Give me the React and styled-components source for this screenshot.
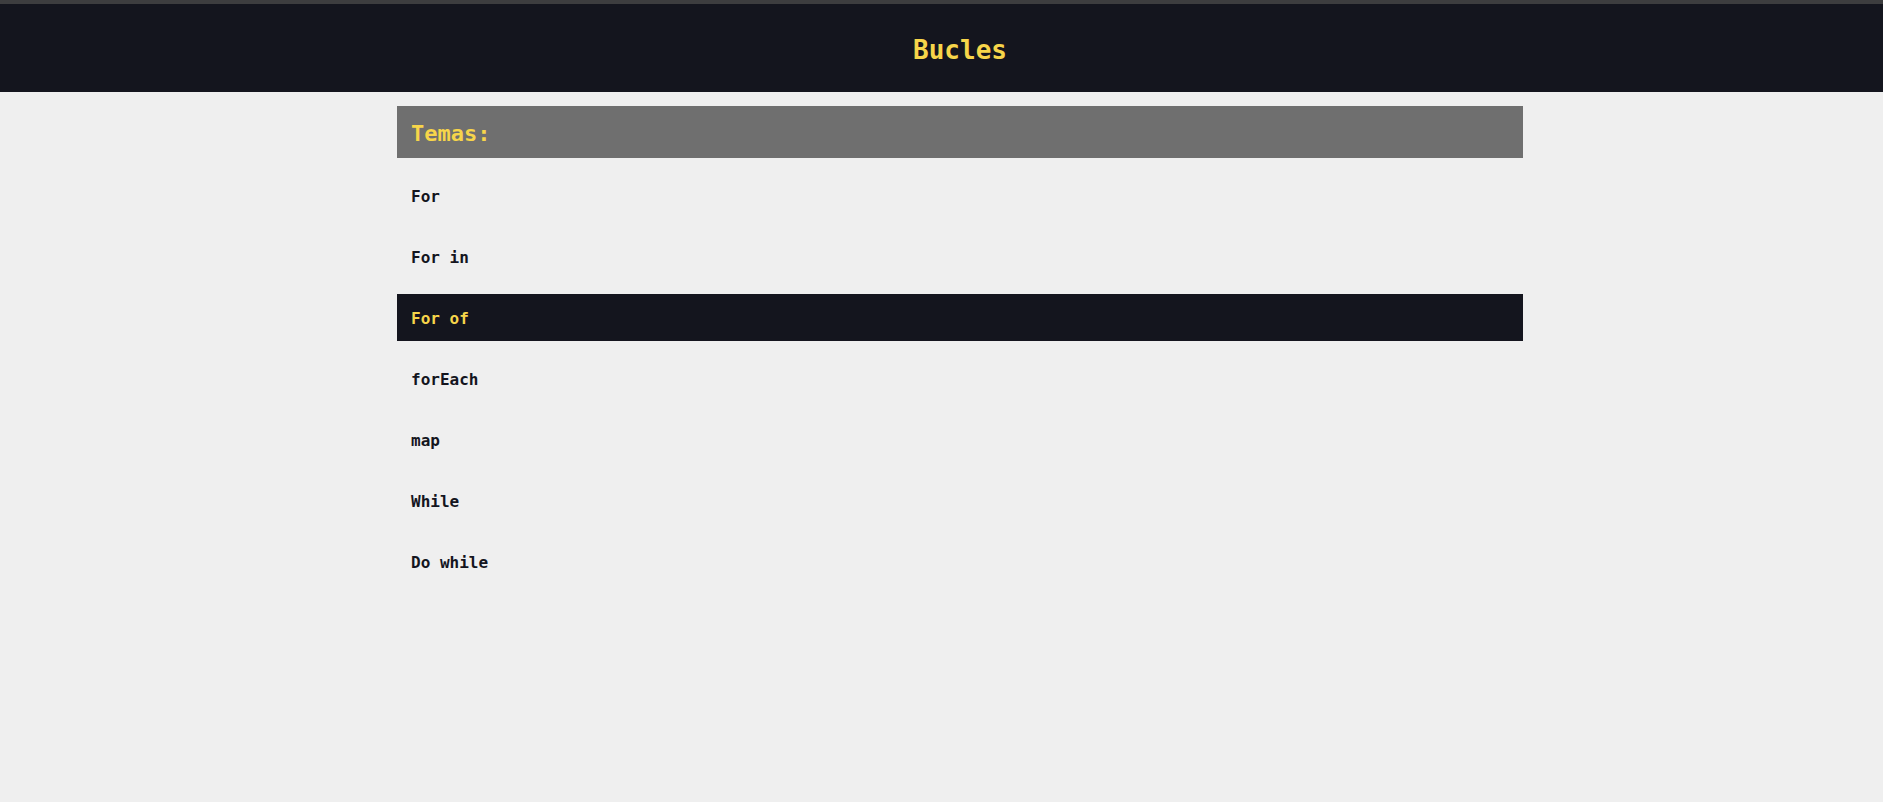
import React from "react";
import styled, { createGlobalStyle } from "styled-components";

const Global = createGlobalStyle`
  html, body { margin: 0; padding: 0; background: #efefef; }
  body { font-family: "DejaVu Sans Mono", "Liberation Mono", monospace; }
  * { box-sizing: border-box; }
`;

const TopStrip = styled.div`
  height: 4px;
  background: #3d3d3f;
`;

const Header = styled.header`
  height: 88px;
  background: #14151e;
  display: flex;
  align-items: center;
  justify-content: center;
  padding: 3px 0 0 37px;
`;

const Title = styled.h1`
  margin: 0;
  font-size: 26px;
  font-weight: bold;
  color: #f7d54a;
`;

const Main = styled.main`
  display: flex;
  justify-content: center;
  padding: 14px 0 0 37px;
`;

const Panel = styled.section`
  width: 1126px;
  display: flex;
  flex-direction: column;
  gap: 14px;
`;

const PanelHead = styled.div`
  height: 52px;
  background: #6f6f6f;
  display: flex;
  align-items: center;
  padding: 2px 0 0 14px;
  font-size: 22px;
  font-weight: bold;
  color: #f7d54a;
`;

const List = styled.ul`
  list-style: none;
  margin: 0;
  padding: 0;
  display: flex;
  flex-direction: column;
  gap: 14px;
`;

const Item = styled.li`
  height: 47px;
  display: flex;
  align-items: center;
  padding: 2px 0 0 14px;
  font-size: 16px;
  font-weight: bold;
  background: ${(p) => (p.$active ? "#14151e" : "transparent")};
  color: ${(p) => (p.$active ? "#f7d54a" : "#14151e")};
`;

const topics = ["For", "For in", "For of", "forEach", "map", "While", "Do while"];

export default function App() {
  return (
    <>
      <Global />
      <TopStrip />
      <Header>
        <Title>Bucles</Title>
      </Header>
      <Main>
        <Panel>
          <PanelHead>Temas:</PanelHead>
          <List>
            {topics.map((t) => (
              <Item key={t} $active={t === "For of"}>
                {t}
              </Item>
            ))}
          </List>
        </Panel>
      </Main>
    </>
  );
}
